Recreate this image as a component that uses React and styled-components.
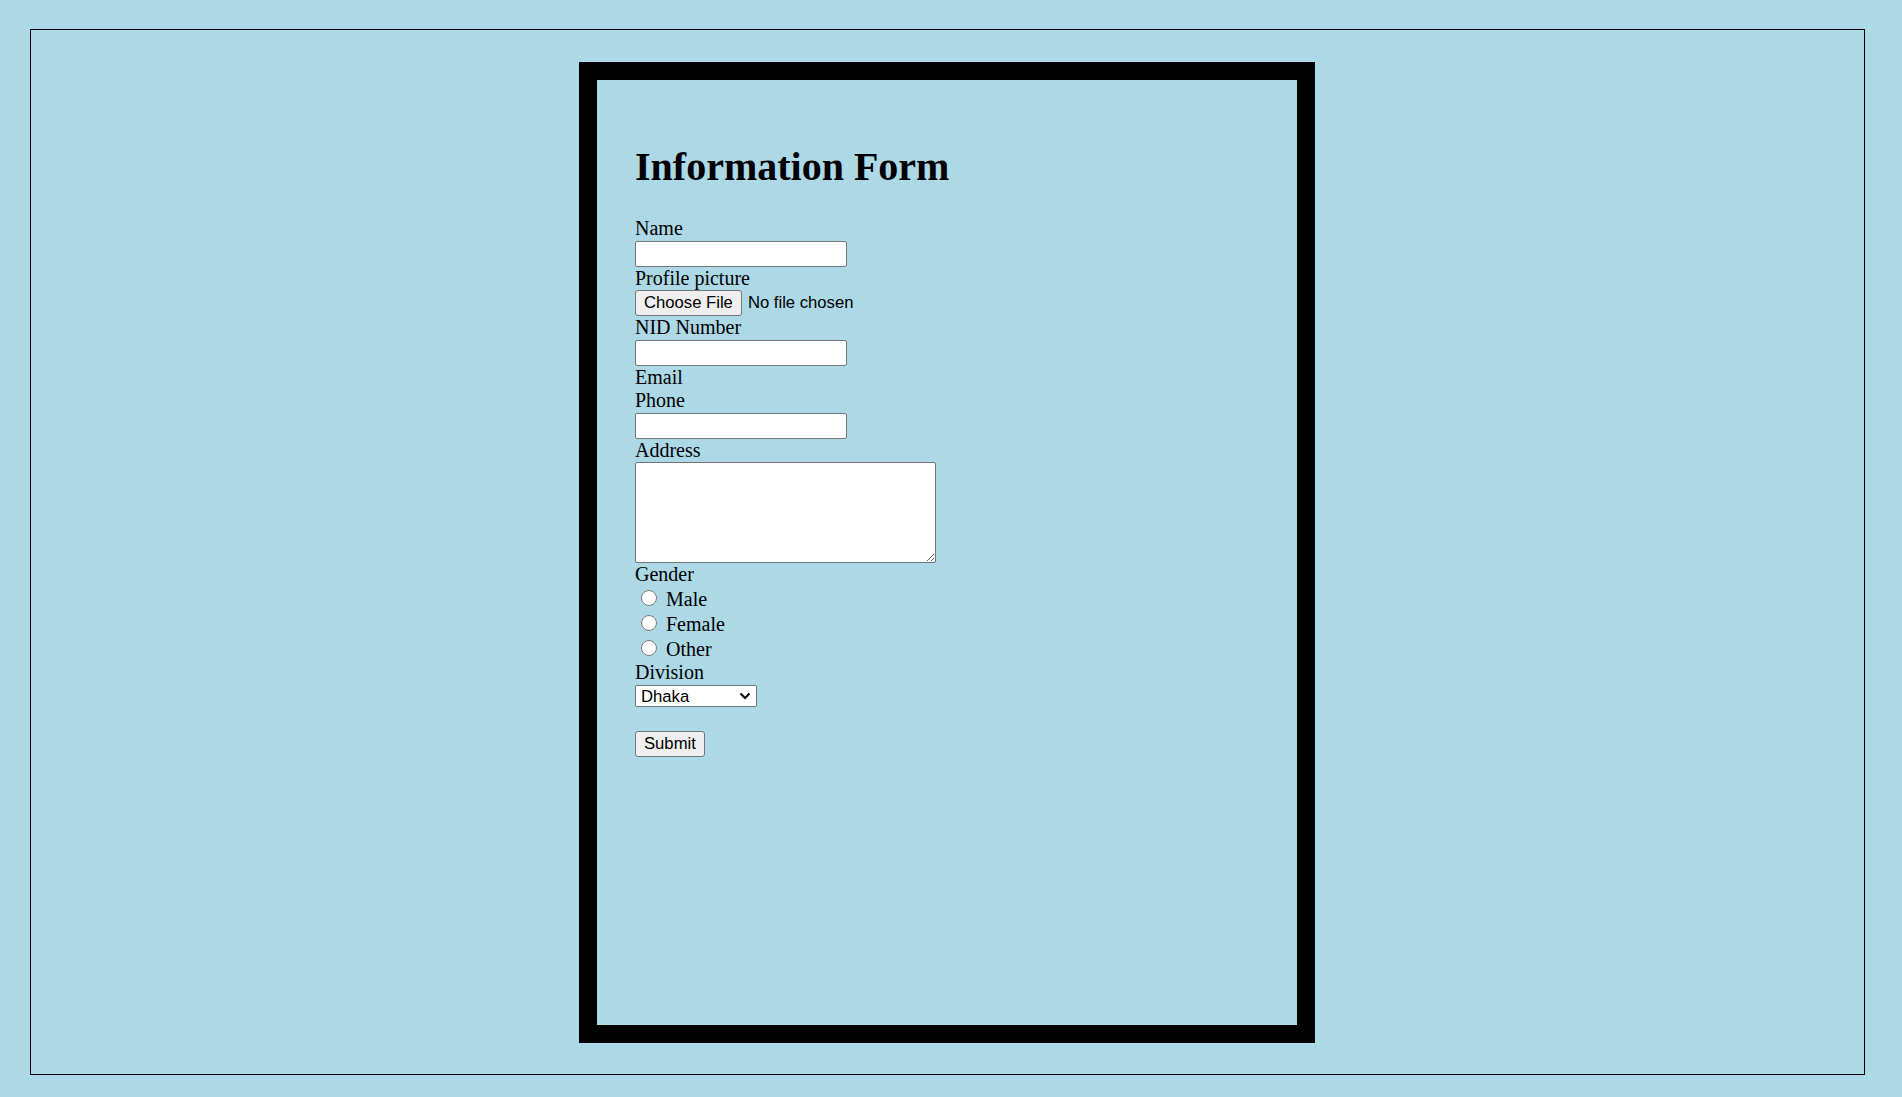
import React from "react";
import styled, { createGlobalStyle } from "styled-components";

const GlobalStyle = createGlobalStyle`
  html,
  body {
    margin: 0;
    padding: 0;
  }
  body {
    background-color: #add8e6;
    color: #000;
    font-family: "Liberation Serif", "Times New Roman", serif;
    font-size: 20px;
  }
`;

const Page = styled.div`
  padding: 29px 37px 0 30px;
`;

const Frame = styled.div`
  box-sizing: border-box;
  height: 1046px;
  border: 1px solid #000;
  padding-top: 32px;
  display: flex;
  justify-content: center;
  align-items: flex-start;
`;

const Card = styled.div`
  box-sizing: border-box;
  width: 736px;
  height: 981px;
  margin-right: 1px;
  border: 18px solid #000;
  padding: 37px 38px;
`;

const Title = styled.h1`
  margin: 27px 0;
  font-size: 40px;
  line-height: 46px;
  font-weight: bold;
`;

const Form = styled.form`
  display: flex;
  flex-direction: column;
  align-items: flex-start;
`;

const Label = styled.label`
  display: block;
  line-height: 23px;
`;

const controlFont = `
  font-family: "Liberation Sans", Arial, sans-serif;
  font-size: 16.67px;
  color: #000;
`;

const TextInput = styled.input`
  box-sizing: border-box;
  width: 212px;
  height: 26px;
  margin: 1px 0 0 0;
  padding: 1px 3px;
  border: 1px solid #767676;
  border-radius: 2px;
  background: #fff;
  ${controlFont}
`;

const FileInput = styled.input`
  display: block;
  height: 26px;
  margin: 0;
  ${controlFont}

  &::file-selector-button {
    box-sizing: border-box;
    height: 26px;
    margin: 0 6px 0 0;
    padding: 1px 8px;
    border: 1px solid #767676;
    border-radius: 3px;
    background: #efefef;
    ${controlFont}
  }
`;

const TextArea = styled.textarea`
  box-sizing: border-box;
  width: 301px;
  height: 101px;
  margin: 0;
  padding: 2px;
  border: 1px solid #767676;
  border-radius: 2px;
  background: #fff;
  ${controlFont}
`;

const RadioRow = styled.label`
  display: flex;
  align-items: flex-start;
  height: 25px;
  line-height: 23px;
`;

const Radio = styled.input`
  width: 16px;
  height: 16px;
  margin: 4px 9px 0 6px;
`;

const RadioText = styled.span`
  padding-top: 2px;
`;

const SelectWrap = styled.div`
  position: relative;
  margin-top: 1px;
`;

const Select = styled.select`
  display: block;
  box-sizing: border-box;
  width: 122px;
  height: 22px;
  margin: 0;
  padding: 0 24px 0 5px;
  border: 1px solid #767676;
  border-radius: 2px;
  background: #fff;
  appearance: none;
  ${controlFont}
`;

const Chevron = styled.svg`
  position: absolute;
  top: 7px;
  right: 6px;
  width: 12px;
  height: 8px;
  pointer-events: none;
`;

const SubmitButton = styled.button`
  box-sizing: border-box;
  height: 26px;
  margin-top: 24px;
  padding: 1px 8px;
  border: 1px solid #767676;
  border-radius: 3px;
  background: #efefef;
  ${controlFont}
`;

const genders = ["Male", "Female", "Other"];
const divisions = [
  "Dhaka",
  "Chattogram",
  "Rajshahi",
  "Khulna",
  "Barishal",
  "Sylhet",
  "Rangpur",
  "Mymensingh"
];

export default function App() {
  return (
    <>
      <GlobalStyle />
      <Page>
        <Frame>
          <Card>
            <Title>Information Form</Title>
            <Form onSubmit={e => e.preventDefault()}>
              <Label htmlFor="name">Name</Label>
              <TextInput id="name" type="text" />
              <Label htmlFor="picture">Profile picture</Label>
              <FileInput id="picture" type="file" />
              <Label htmlFor="nid">NID Number</Label>
              <TextInput id="nid" type="text" />
              <Label>Email</Label>
              <Label htmlFor="phone">Phone</Label>
              <TextInput id="phone" type="text" />
              <Label htmlFor="address">Address</Label>
              <TextArea id="address" />
              <Label>Gender</Label>
              {genders.map(g => (
                <RadioRow key={g}>
                  <Radio type="radio" name="gender" value={g} />
                  <RadioText>{g}</RadioText>
                </RadioRow>
              ))}
              <Label htmlFor="division">Division</Label>
              <SelectWrap>
                <Select id="division" defaultValue="Dhaka">
                  {divisions.map(d => (
                    <option key={d}>{d}</option>
                  ))}
                </Select>
                <Chevron viewBox="0 0 12 8">
                  <path
                    d="M1.5 1.5 L6 6 L10.5 1.5"
                    fill="none"
                    stroke="#000"
                    strokeWidth="2"
                  />
                </Chevron>
              </SelectWrap>
              <SubmitButton type="submit">Submit</SubmitButton>
            </Form>
          </Card>
        </Frame>
      </Page>
    </>
  );
}
